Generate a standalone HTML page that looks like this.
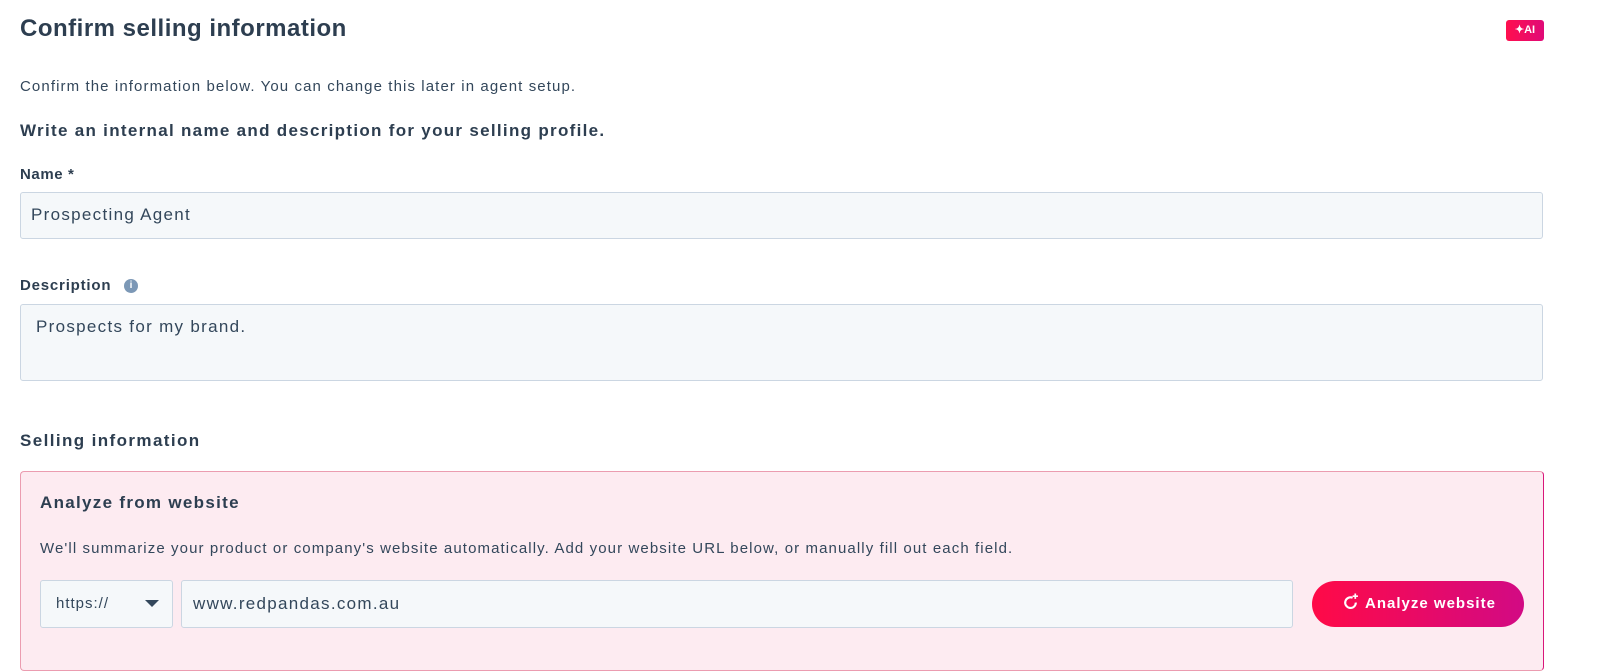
<!DOCTYPE html>
<html><head><meta charset="utf-8"><style>
*{box-sizing:border-box;margin:0;padding:0}
body{width:1600px;height:663px;overflow:hidden;background:#fff;font-family:"Liberation Sans",sans-serif;color:#33475b;position:relative}
.a{position:absolute;white-space:nowrap}
h1{position:absolute;left:20px;top:15px;font-size:24px;letter-spacing:0.5px;font-weight:bold;color:#2d3e50}
.lbl{position:absolute;left:20px;font-size:15px;font-weight:bold;color:#2d3e50;white-space:nowrap}
.inp{position:absolute;background:#f5f8fa;border:1px solid #cbd6e2;border-radius:3px;font-size:17px;letter-spacing:1.3px;color:#33475b;white-space:nowrap}
</style></head><body>
<h1>Confirm selling information</h1>
<div class="a" style="left:1506px;top:20px;width:38px;height:21px;border-radius:3px;background:linear-gradient(90deg,#ff0f4e,#e00a78);color:#fff;font-size:11px;font-weight:bold;line-height:21px;text-align:center">✦AI</div>
<div class="a" style="left:20px;top:78px;font-size:15px;letter-spacing:1.1px;color:#33475b">Confirm the information below. You can change this later in agent setup.</div>
<div class="lbl" style="top:121px;font-size:17px;letter-spacing:1.3px">Write an internal name and description for your selling profile.</div>
<div class="lbl" style="top:166px;letter-spacing:0.6px">Name *</div>
<div class="inp" style="left:20px;top:192px;width:1523px;height:47px;padding:12px 10px">Prospecting Agent</div>
<div class="lbl" style="top:277px;letter-spacing:0.8px">Description</div>
<div class="a" style="left:124px;top:279px;width:14px;height:14px;border-radius:50%;background:#7c98b6;color:#fff;font-size:10px;font-weight:bold;text-align:center;line-height:14px">i</div>
<div class="inp" style="left:20px;top:304px;width:1523px;height:77px;padding:12px 15px">Prospects for my brand.</div>
<div class="lbl" style="top:431px;font-size:17px;letter-spacing:1.4px">Selling information</div>
<div class="a" style="left:20px;top:471px;width:1524px;height:200px;background:#fdebf1;border:1px solid #eb9cb0;border-right-color:#d9167a;border-radius:4px"></div>
<div class="lbl" style="left:40px;top:493px;font-size:17px;letter-spacing:1.3px">Analyze from website</div>
<div class="a" style="left:40px;top:540px;font-size:15px;letter-spacing:1.1px">We'll summarize your product or company's website automatically. Add your website URL below, or manually fill out each field.</div>
<div class="inp" style="left:40px;top:580px;width:133px;height:48px;padding:14px 15px;font-size:15px;letter-spacing:1px">https://</div>
<div class="a" style="left:145px;top:600px;width:0;height:0;border-left:7px solid transparent;border-right:7px solid transparent;border-top:7px solid #33475b"></div>
<div class="inp" style="left:181px;top:580px;width:1112px;height:48px;padding:13px 11px">www.redpandas.com.au</div>
<div class="a" style="left:1312px;top:581px;width:212px;height:46px;border-radius:23px;background:linear-gradient(90deg,#ff0a47,#d20a84);color:#fff;font-size:15px;letter-spacing:1px;font-weight:bold;line-height:46px;text-align:center;padding-left:2px">
<svg width="17" height="17" viewBox="0 0 16 16" style="vertical-align:-2px;margin-right:6px"><path d="M10 4.5A5 5 0 1 0 13 9" fill="none" stroke="#fff" stroke-width="2"/><path d="M12.5 0.5v5M10 3h5" stroke="#fff" stroke-width="1.6"/></svg>Analyze website</div>
</body></html>
